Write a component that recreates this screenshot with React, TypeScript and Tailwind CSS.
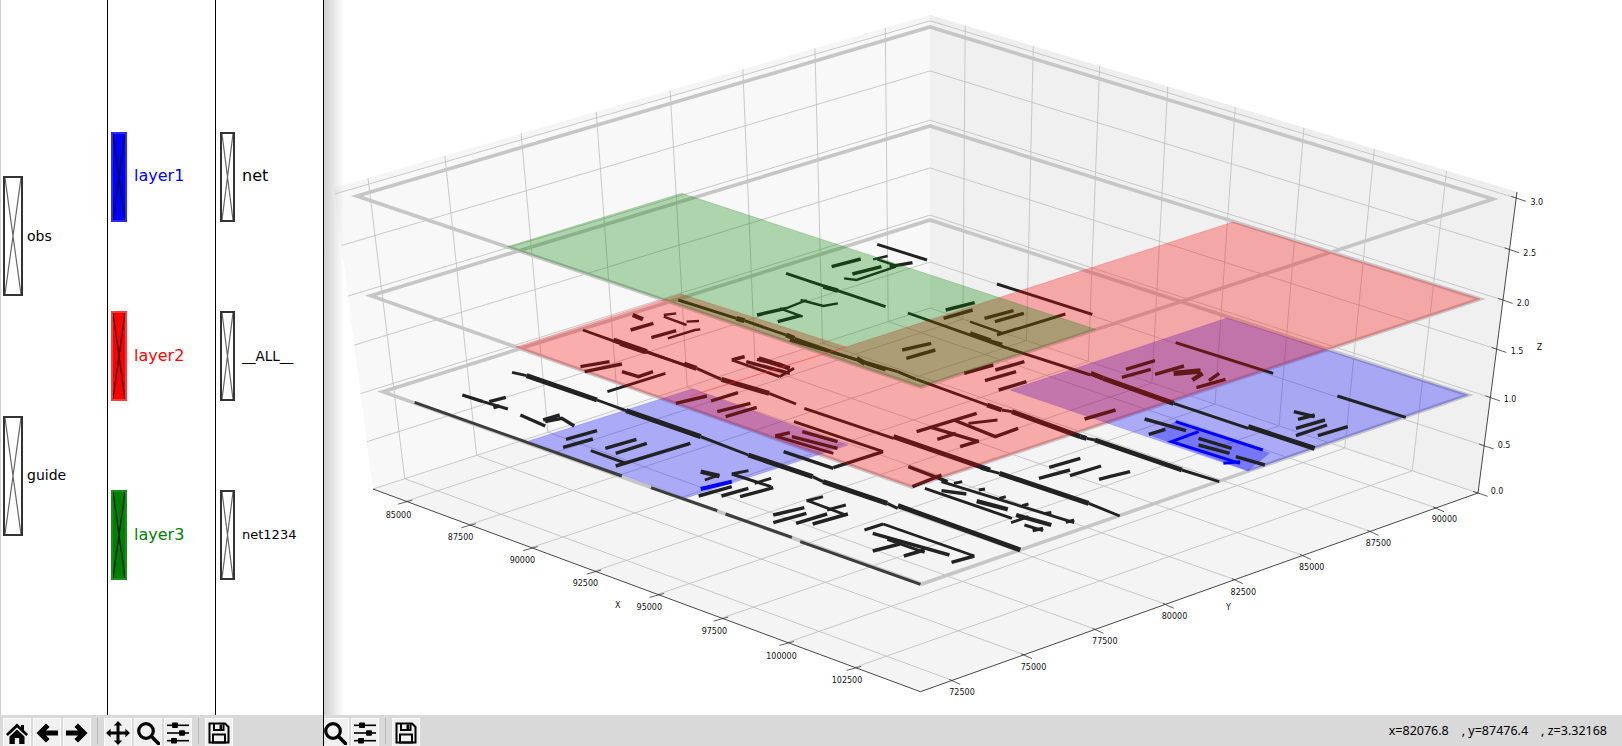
import React from "react";

type Pt = [number, number];
const L: Pt = [373, 489], F: Pt = [920.4, 691.7], R: Pt = [1478, 493], B: Pt = [930, 308];
const TL: Pt = [334, 188], TB: Pt = [930, 15], TR: Pt = [1517, 192];
const mix = (a: Pt, b: Pt, t: number): Pt => [a[0] + (b[0] - a[0]) * t, a[1] + (b[1] - a[1]) * t];
const US = [0.06, 0.176, 0.289, 0.405, 0.52, 0.637, 0.757, 0.88];
const SS = [0.057, 0.186, 0.314, 0.44, 0.564, 0.686, 0.807, 0.925];
const TS = [0, 0.157, 0.317, 0.478, 0.641, 0.809, 0.98];
const poly = (pts: Pt[]) => pts.map((p) => p.join(",")).join(" ");

const XL: [string, number, number][] = [
  ["85000", 398.5, 515], ["87500", 460.6, 537.7], ["90000", 522.4, 560.3], ["92500", 585.4, 583.3],
  ["95000", 649.3, 607.7], ["97500", 714.4, 631.7], ["100000", 781.5, 656.3], ["102500", 847, 680.7],
];
const YL: [string, number, number][] = [
  ["72500", 962, 692.3], ["75000", 1033.5, 667.7], ["77500", 1104.8, 641.7], ["80000", 1174.5, 616.3],
  ["82500", 1243.3, 592.7], ["85000", 1311.7, 567.3], ["87500", 1378.4, 543.3], ["90000", 1444.4, 519.3],
];
const ZL: [string, number, number][] = [
  ["0.0", 1497, 491.7], ["0.5", 1504, 445.3], ["1.0", 1510, 399.3], ["1.5", 1517, 351],
  ["2.0", 1523, 303.7], ["2.5", 1529.7, 253.7], ["3.0", 1536.8, 202.3],
];

// wires: [zone, width, ...x,y] in crop coordinates of four regions of the plot
const ZONE: Record<number, Pt> = { 4: [330, 0], 5: [970, 0], 6: [340, 340], 7: [900, 340] };
const conv = (z: number, c: number[]) => {
  const o = ZONE[z];
  const out: string[] = [];
  for (let i = 0; i < c.length; i += 2) out.push(`${o[0] + c[i] / 2.412},${o[1] + c[i + 1] / 3}`);
  return out.join(" ");
};
const WIRES: number[][] = [
  // long rails
  [6, 2.5, 415, 97, 450, 107], [6, 4.5, 450, 107, 620, 180], [6, 2.5, 620, 180, 690, 212], [6, 4.5, 690, 212, 870, 290],
  [6, 2.5, 870, 290, 985, 345], [6, 4.5, 985, 345, 1140, 410], [6, 2.5, 1140, 410, 1165, 425], [6, 4.5, 1165, 425, 1320, 490], [6, 2.5, 1320, 490, 1345, 505], [7, 4.5, -5, 497, 290, 630],
  [4, 2.5, 610, 990, 700, 1030], [4, 4.5, 700, 1030, 760, 1055], [4, 2.5, 760, 1055, 880, 1105],
  [6, 4.5, 660, 0, 740, 35], [6, 2.5, 740, 35, 830, 75], [6, 4.5, 830, 72, 860, 85], [6, 2.5, 860, 85, 920, 118], [6, 4.5, 920, 118, 1035, 160], [6, 2.5, 1035, 160, 1100, 192],
  [6, 2.5, 1120, 205, 1335, 295], [6, 4.5, 1335, 290, 1568, 390], [7, 2.5, 195, 385, 240, 400], [7, 4.5, 240, 400, 455, 490], [7, 2.5, 455, 490, 530, 528],
  [4, 2.5, 840, 900, 980, 955], [4, 4.5, 980, 955, 1000, 962], [4, 2.5, 1000, 962, 1100, 1005], [4, 4.5, 1100, 1005, 1120, 1015], [4, 2.5, 1120, 1015, 1270, 1080], [4, 4.5, 1270, 1075, 1290, 1090],
  [4, 2.5, 1290, 1090, 1340, 1110], [6, 2.5, 1085, 0, 1345, 95], [6, 2.5, 1345, 95, 1390, 118], [7, 2.5, 40, 118, 210, 195], [7, 4.5, 210, 195, 245, 210], [7, 2.5, 245, 210, 270, 215], [7, 4.5, 270, 215, 435, 290], [7, 4.5, 435, 290, 450, 295], [7, 2.5, 450, 295, 470, 300], [7, 4.5, 470, 300, 680, 390], [7, 2.5, 680, 390, 770, 425],
  [7, 2.5, 19, -81, 260, 25], [7, 2.5, 260, 25, 460, 105], [7, 4.5, 460, 100, 490, 115], [7, 4.5, 490, 115, 660, 190], [7, 2.5, 660, 190, 840, 265], [7, 4.5, 840, 260, 1000, 325],
  [5, 2.5, 65, 852, 295, 943], [7, 2.5, 665, 8, 900, 100], [7, 2.5, 1055, 168, 1220, 232],
  [7, 3, 590, 237, 690, 272], [7, 3, 810, 350, 880, 375], [7, 3, 600, 283, 640, 268],
  // top cluster
  [4, 2.5, 1320, 733, 1440, 780], [4, 3, 1210, 800, 1280, 777], [4, 2, 1310, 778, 1345, 768], [4, 2, 1320, 778, 1365, 797], [4, 3, 1350, 800, 1405, 788],
  [4, 3, 1260, 822, 1330, 800], [4, 2, 1240, 835, 1270, 840, 1365, 800], [4, 2.5, 1100, 820, 1340, 920], [4, 4, 1190, 860, 1225, 872],
  [4, 3, 1030, 945, 1100, 925], [4, 2, 1085, 925, 1140, 950], [4, 3, 1080, 965, 1135, 947], [4, 2, 1100, 925, 1150, 900], [4, 2, 1135, 900, 1190, 918, 1225, 910],
  [4, 3, 1485, 930, 1555, 908], [4, 3, 1480, 955, 1550, 930], [4, 3, 1380, 1050, 1450, 1030], [4, 3, 1390, 1075, 1460, 1050],
  [5, 3, 35, 955, 105, 932], [5, 3, 60, 965, 130, 940], [5, 2.5, 65, 1005, 230, 942], [5, 2, 0, 965, 80, 1000], [5, 4, 0, 1000, 50, 1022], [5, 2, 50, 1022, 78, 1032],
  // upper red cluster
  [4, 4, 730, 945, 755, 958], [4, 3, 725, 990, 780, 970], [4, 2, 805, 945, 835, 940], [4, 2, 805, 950, 860, 975], [4, 2, 860, 965, 890, 963], [4, 3, 775, 1013, 835, 992], [4, 2, 815, 1015, 880, 990, 893, 988],
  [4, 3, 970, 1080, 1000, 1070], [4, 3, 1030, 1078, 1090, 1095],
  // left wires
  [6, 3, 295, 165, 345, 185], [6, 2.5, 345, 185, 405, 207], [6, 3, 360, 185, 400, 172], [6, 3, 370, 203, 385, 198],
  [6, 3, 435, 225, 495, 258], [6, 3, 490, 240, 530, 225], [6, 3, 495, 245, 535, 235, 565, 258],
  [6, 3, 545, 298, 620, 272], [6, 3, 538, 322, 610, 297], [6, 3, 640, 325, 715, 298], [6, 3, 665, 340, 740, 310], [6, 2.5, 605, 332, 690, 370], [6, 3, 665, 378, 845, 310],
  [6, 4, 870, 395, 915, 408], [6, 2.5, 880, 420, 915, 405],
  [6, 2.5, 945, 402, 985, 392], [6, 2.5, 945, 402, 1040, 440], [6, 2.5, 1000, 430, 1040, 415], [6, 3, 865, 468, 945, 440], [6, 3, 920, 468, 985, 445], [6, 3, 965, 470, 1045, 443],
  [6, 3, 1045, 525, 1120, 503], [6, 3, 1045, 548, 1125, 520], [6, 3, 1100, 550, 1175, 522], [6, 3, 1140, 552, 1225, 522], [6, 2.5, 1125, 483, 1165, 470], [6, 2.5, 1130, 483, 1220, 525], [6, 2.5, 1175, 510, 1220, 495],
  [6, 2.5, 1265, 570, 1310, 552], [6, 2.5, 1310, 552, 1530, 648], [6, 3, 1475, 667, 1530, 648], [6, 3, 1285, 580, 1470, 645], [6, 3, 1285, 633, 1350, 612], [6, 2.5, 1320, 598, 1410, 637], [6, 3, 1360, 648, 1410, 630],
  [6, 3, 1050, 288, 1085, 278], [6, 2.5, 1095, 245, 1310, 335], [6, 2.5, 1050, 288, 1190, 340], [6, 3, 1090, 290, 1200, 325], [6, 3, 1115, 275, 1200, 305], [6, 3, 1190, 383, 1310, 335], [6, 3, 1070, 335, 1190, 385],
  [6, 2.5, 945, 60, 975, 50], [6, 2.5, 945, 60, 1060, 110], [6, 3, 980, 65, 1085, 100], [6, 4, 1010, 55, 1085, 85], [6, 2.5, 1060, 110, 1095, 85],
  [6, 3, 810, 190, 885, 168], [6, 3, 895, 183, 960, 158], [6, 3, 910, 215, 990, 190], [6, 3, 930, 230, 1005, 202],
  [6, 3, 580, 80, 650, 65], [6, 3, 590, 95, 680, 72], [6, 2.5, 645, 155, 785, 100], [6, 3, 680, 95, 720, 110, 755, 95],
  // lower middle
  [7, 3, 40, 275, 185, 220], [7, 3, 75, 262, 190, 305], [7, 3, 130, 240, 230, 290, 285, 265], [7, 3, 90, 298, 135, 280], [7, 3, 145, 320, 190, 303], [7, 2.5, 165, 250, 235, 240],
  [7, 3, 20, 380, 115, 425], [7, 3, 30, 440, 100, 405], [7, 2.5, 100, 425, 420, 548],
  [7, 2.5, 130, 430, 150, 425], [7, 2.5, 190, 450, 205, 447], [7, 2.5, 240, 475, 255, 470], [7, 2.5, 295, 497, 310, 492], [7, 2.5, 350, 520, 365, 517], [7, 2.5, 400, 547, 420, 540],
  [7, 2.5, 60, 445, 270, 535], [7, 4, 185, 483, 260, 508], [7, 4, 280, 525, 365, 555], [7, 2.5, 268, 548, 310, 530], [7, 2.5, 300, 555, 345, 572], [7, 3, 320, 572, 345, 565], [7, 3, 100, 452, 160, 462],
  [7, 3, 360, 382, 435, 355], [7, 3, 335, 415, 410, 390], [7, 3, 410, 407, 485, 378], [7, 3, 480, 418, 505, 410, 555, 395],
  [7, 3, 545, 88, 615, 62], [7, 3, 535, 112, 605, 88], [7, 3, 615, 103, 685, 78], [7, 5, 660, 100, 725, 93], [7, 4, 705, 120, 730, 100], [7, 3, 715, 143, 785, 118], [7, 3, 745, 122, 770, 100],
  [7, 3, 445, 237, 520, 210], [7, 3, 205, 122, 280, 95], [7, 3, 230, 90, 300, 65], [7, 3, 155, 100, 225, 75], [7, 3, 238, 150, 305, 125],
  [7, 3, 950, 215, 1000, 230], [7, 3, 960, 238, 1000, 225], [7, 3, 955, 265, 1025, 240], [7, 3, 955, 287, 1030, 255], [7, 3, 1008, 287, 1080, 260],
  [7, 3, 720, 295, 800, 325], [7, 3, 720, 315, 795, 340],
];
const GREYWIRE: number[][] = [
  [6, 3, 180, 187, 680, 408], [6, 3, 750, 443, 910, 512], [6, 3, 930, 522, 1090, 592], [6, 3, 1110, 605, 1400, 733],
];
const BLUEWIRE: number[][] = [
  [6, 4, 870, 447, 945, 425],
  [7, 3, 665, 245, 875, 330], [7, 3, 720, 275, 655, 305, 820, 370], [7, 3, 780, 370, 820, 365],
];

function Plot() {
  return (
    <svg className="block w-full h-full" viewBox="324 0 1298 715" fill="none">
      <polygon points={poly([L, B, TB, TL])} fill="#f8f8f8" />
      <polygon points={poly([B, R, TR, TB])} fill="#f0f0f0" />
      <polygon points={poly([L, F, R, B])} fill="#f4f4f4" />
      <polygon points={poly([mix(L, TL, 0.98), mix(B, TB, 0.98), TB, TL])} fill="#f5f5f5" />
      <polygon points={poly([mix(B, TB, 0.98), mix(R, TR, 0.98), TR, TB])} fill="#eeeeee" />
      <g stroke="#bcbcbc" strokeWidth="0.8">
        {US.map((u) => {
          const a = mix(L, F, u), b = mix(B, R, u), c = mix(TB, TR, u);
          return <polyline key={u} points={poly([a, b, c])} />;
        })}
        {SS.map((s) => {
          const a = mix(F, R, s), b = mix(L, B, s), c = mix(TL, TB, s);
          return <polyline key={s} points={poly([a, b, c])} />;
        })}
        {TS.map((t) => (
          <polyline key={t} points={poly([mix(L, TL, t), mix(B, TB, t), mix(R, TR, t)])} />
        ))}
      </g>
      <g stroke="#c6c6c6" strokeWidth="3.6">
        <polygon points="357,196 930,27 1493,199 921,387" />
        <polygon points="370.6,295.7 930,126 1480,299 912,487" />
        <polygon points="382.7,391.7 930,220 1468,395 921.7,584" />
      </g>
      <polygon points="528.6,441 692,389 848,445 686,498" fill="#0000ff" fillOpacity="0.3" stroke="#0000ff" strokeOpacity="0.15" />
      <polygon points="1010,390 1227,318 1468,395 1248,471" fill="#0000ff" fillOpacity="0.3" stroke="#0000ff" strokeOpacity="0.15" />
      <polygon points="1149,435 1176,421 1270,453 1248,471" fill="#0000ff" fillOpacity="0.3" />
      {GREYWIRE.map((w, i) => (
        <polyline key={i} points={conv(w[0], w.slice(2))} stroke="#3c3c3c" strokeWidth={w[1]} />
      ))}
      {WIRES.map((w, i) => (
        <polyline key={i} points={conv(w[0], w.slice(2))} stroke="#222222" strokeWidth={w[1] + 0.4} />
      ))}
      {BLUEWIRE.map((w, i) => (
        <polyline key={i} points={conv(w[0], w.slice(2))} stroke="#0000ff" strokeWidth={w[1]} />
      ))}
      <polygon points="516,347 681,294 846,347 1233,222 1480,299 912,487" fill="#ff0000" fillOpacity="0.3" stroke="#ff0000" strokeOpacity="0.2" />
      <polygon points="507.4,246.7 681.6,193.3 1095.6,329.3 920.7,386.7" fill="#008000" fillOpacity="0.3" stroke="#008000" strokeOpacity="0.2" />
      <line x1="690" y1="396" x2="846" y2="347" stroke="#ff3030" strokeWidth="0.8" strokeOpacity="0.7" />
      <polyline points={poly([L, F, R, TR])} stroke="#333" strokeWidth="0.9" />
      <g stroke="#333" strokeWidth="0.8">
        {US.map((u) => {
          const e = mix(L, F, u);
          return <line key={u} x1={e[0] - 8} y1={e[1] + 3} x2={e[0] + 6.5} y2={e[1] - 1} />;
        })}
        {SS.map((s) => {
          const e = mix(F, R, s);
          return <line key={s} x1={e[0] - 3} y1={e[1] - 1} x2={e[0] + 8} y2={e[1] + 4} />;
        })}
        {TS.map((t) => {
          const e = mix(R, TR, t);
          return <line key={t} x1={e[0] - 5} y1={e[1] - 1.7} x2={e[0] + 9.6} y2={e[1] + 3.3} />;
        })}
      </g>
      <g fill="#111" fontSize="8" textAnchor="middle" dominantBaseline="central" fontFamily="'DejaVu Sans', sans-serif">
        {[...XL, ...YL, ...ZL].map(([t, x, y], i) => (
          <text key={i} x={x} y={y}>{t}</text>
        ))}
        <text x="617.8" y="605.7">X</text>
        <text x="1228.4" y="607.7">Y</text>
        <text x="1539.6" y="347.7">Z</text>
      </g>
    </svg>
  );
}

function Check({ h, fill, border, cross }: { h: string; fill: string; border: string; cross: string }) {
  return (
    <div className={`${h} ${fill} ${border} border-2 box-border`}>
      <svg className="block w-full h-full" viewBox="0 0 10 10" preserveAspectRatio="none">
        <path d="M0 0L10 10M10 0L0 10" stroke={cross} strokeWidth="1.2" vectorEffect="non-scaling-stroke" fill="none" />
      </svg>
    </div>
  );
}

function IHome() {
  return <path d="M12 2.5L1 13l1.8 1.9L12 6.4l9.2 8.5L23 13l-4-3.8V4h-3v2.3zM4.5 15.5L12 8.6l7.5 6.9V23h-5.3v-6H9.8v6H4.5z" fill="#000" />;
}
function IBack() {
  return <path d="M1.5 12l9.5-9.5 3.6 3.6-3.6 3.4H23v5H11l3.6 3.4-3.6 3.6z" fill="#000" />;
}
function IForward() {
  return <path d="M22.5 12L13 2.5 9.4 6.1l3.6 3.4H1v5h12l-3.6 3.4 3.6 3.6z" fill="#000" />;
}
function IMove() {
  return <path d="M12 0l4.2 4.6h-2.7v5.9h5.9V7.8L24 12l-4.6 4.2v-2.7h-5.9v5.9h2.7L12 24l-4.2-4.6h2.7v-5.9H4.6v2.7L0 12l4.6-4.2v2.7h5.9V4.6H7.8z" fill="#000" />;
}
function IZoom() {
  return (
    <g fill="none" stroke="#000">
      <circle cx="10" cy="10" r="7.3" strokeWidth="3.2" />
      <path d="M15.5 15.5L22.5 22.5" strokeWidth="3.6" strokeLinecap="round" />
    </g>
  );
}
function ISliders() {
  return (
    <g fill="#000">
      <rect x="1" y="3.5" width="22" height="1.6" />
      <rect x="1" y="11.2" width="22" height="1.6" />
      <rect x="1" y="18.9" width="22" height="1.6" />
      <rect x="6" y="1.5" width="6" height="5.6" rx="1" />
      <rect x="13" y="9.2" width="6" height="5.6" rx="1" />
      <rect x="5" y="16.9" width="6" height="5.6" rx="1" />
    </g>
  );
}
function ISave() {
  return (
    <g fill="none" stroke="#000" strokeWidth="2">
      <path d="M2.5 2.5h15.5l3.5 3.5v15.5H2.5z" />
      <path d="M7 2.5v6.5h9.5V2.5" />
      <rect x="6" y="13.5" width="12" height="8" />
      <rect x="12.5" y="3.5" width="2.5" height="4.5" fill="#000" stroke="none" />
    </g>
  );
}

function Btn({ children }: { children: React.ReactNode }) {
  return (
    <div className="w-[28px] h-[30px] shrink-0 bg-[#f0f0f0] border border-[#fbfbfb] flex justify-center pt-[2px] box-border">
      <svg width="24" height="24" viewBox="0 0 24 24" className="shrink-0">{children}</svg>
    </div>
  );
}
const Sep = () => <div className="w-px h-[26px] bg-[#bcbcbc] mx-[4px] shrink-0" />;

export default function App() {
  return (
    <div className="relative flex w-[1622px] h-[746px] overflow-hidden bg-white font-['DejaVu_Sans',sans-serif]">
      <div className="relative z-10 w-[324px] h-full shrink-0 flex flex-col border-r border-black bg-white box-border">
        <div className="flex-1 flex min-h-0">
          <div className="w-[108px] border-l border-[#d0d0d0] border-r border-r-black pl-[2px] flex flex-col justify-center gap-[120px] pb-[3px] box-border">
            <div className="flex items-center">
              <Check h="w-[20px] h-[120px]" fill="bg-white" border="border-[#333]" cross="#666" />
              <span className="ml-[4px] text-[14px] text-black">obs</span>
            </div>
            <div className="flex items-center">
              <Check h="w-[20px] h-[120px]" fill="bg-white" border="border-[#333]" cross="#666" />
              <span className="ml-[4px] -mt-[2px] text-[14px] text-black">guide</span>
            </div>
          </div>
          <div className="w-[108px] border-r border-black pl-[3px] flex flex-col justify-center gap-[89px] pb-[3px] box-border">
            <div className="flex items-center">
              <Check h="w-[16px] h-[90px]" fill="bg-[#0000ff]" border="border-[#2a2aff]" cross="#111" />
              <span className="ml-[7px] -mt-[2px] text-[16px] text-[#0000ff]">layer1</span>
            </div>
            <div className="flex items-center">
              <Check h="w-[16px] h-[90px]" fill="bg-[#ff0000]" border="border-[#ff3a3a]" cross="#111" />
              <span className="ml-[7px] text-[16px] text-[#ff0000]">layer2</span>
            </div>
            <div className="flex items-center">
              <Check h="w-[16px] h-[90px]" fill="bg-[#008000]" border="border-[#1c8c1c]" cross="#111" />
              <span className="ml-[7px] text-[16px] text-[#008000]">layer3</span>
            </div>
          </div>
          <div className="flex-1 pl-[4px] flex flex-col justify-center gap-[89px] pb-[3px] box-border">
            <div className="flex items-center">
              <Check h="w-[15px] h-[90px]" fill="bg-white" border="border-[#333]" cross="#666" />
              <span className="ml-[7px] -mt-[2px] text-[16px] text-black">net</span>
            </div>
            <div className="flex items-center">
              <Check h="w-[15px] h-[90px]" fill="bg-white" border="border-[#333]" cross="#666" />
              <span className="ml-[7px] text-[13.5px] text-black">__ALL__</span>
            </div>
            <div className="flex items-center">
              <Check h="w-[15px] h-[90px]" fill="bg-white" border="border-[#333]" cross="#666" />
              <span className="ml-[7px] text-[13px] text-black">net1234</span>
            </div>
          </div>
        </div>
        <div className="h-[31px] shrink-0 bg-[#d9d9d9] flex items-start gap-[2px] pt-[3px] pl-[3px] overflow-hidden">
          <Btn><IHome /></Btn>
          <Btn><IBack /></Btn>
          <Btn><IForward /></Btn>
          <Sep />
          <Btn><IMove /></Btn>
          <Btn><IZoom /></Btn>
          <Btn><ISliders /></Btn>
          <Sep />
          <Btn><ISave /></Btn>
        </div>
      </div>
      <div className="flex-1 min-w-0 h-full flex flex-col">
        <div className="relative flex-1 min-h-0">
          <Plot />
          <div className="absolute left-0 top-0 bottom-0 w-[20px] bg-gradient-to-r from-[#d0d0d0] to-transparent" />
        </div>
        <div className="h-[31px] shrink-0 bg-[#d9d9d9] flex items-start gap-[2px] pt-[3px] overflow-hidden">
          <div className="-ml-[3px] flex items-start gap-[2px]">
            <Btn><IZoom /></Btn>
            <Btn><ISliders /></Btn>
            <Sep />
            <Btn><ISave /></Btn>
          </div>
          <div className="ml-auto mr-[15px] text-[12.5px] leading-[26px] whitespace-pre text-black font-['Noto_Sans',sans-serif]">
            {"x=82076.8    , y=87476.4    , z=3.32168"}
          </div>
        </div>
      </div>
    </div>
  );
}
